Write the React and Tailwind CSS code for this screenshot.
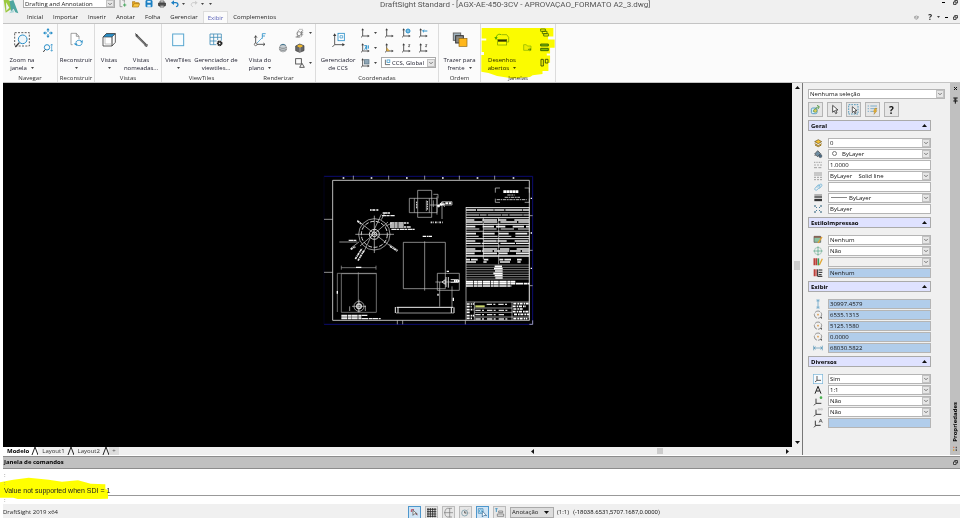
import React, { useState } from 'react';
import { ChevronDown } from 'lucide-react';

const BLUE = '#2a8fc8';
const INK = '#3c3c3c';

const Svg = ({ size = 12, box = 36, className = '', children }) => (
    <svg
        width={size}
        height={size}
        viewBox={`0 0 ${box} ${box}`}
        fill="none"
        stroke={INK}
        strokeWidth="3"
        className={`shrink-0 ${className}`}
        aria-hidden="true"
    >
        {children}
    </svg>
);

/* ---------- ribbon icons ---------- */

const ZoomWindowIcon = () => (
    <Svg size={16} box={48}>
        <rect x="2" y="2" width="44" height="40" strokeDasharray="6 4" strokeWidth="2.5" />
        <circle cx="26" cy="22" r="13" stroke={BLUE} fill="#eef6fa" />
        <path d="M16 32 4 45" strokeWidth="4" />
    </Svg>
);

const PanIcon = () => (
    <Svg size={10} box={30} >
        <path d="M15 3v24M3 15h24" stroke={BLUE} strokeDasharray="9 6" />
        <path d="M15 0l5 7H10zM15 30l5-7H10zM0 15l7-5v10zM30 15l-7-5v10z" fill={BLUE} stroke="none" />
    </Svg>
);

const ZoomFitIcon = () => (
    <Svg size={10} box={30}>
        <circle cx="12" cy="13" r="8" stroke={BLUE} />
        <path d="M6 20 1 27" />
        <path d="M26 4v20M23 7l3-4 3 4M23 21l3 4 3-4" stroke={BLUE} strokeWidth="2" />
    </Svg>
);

const RebuildIcon = () => (
    <Svg size={16} box={48}>
        <path d="M14 38H9V4h16l8 9v8" stroke="#777" strokeWidth="2" fill="#fff" />
        <path d="M25 4v9h8" stroke="#777" strokeWidth="2" />
        <path d="M24 32c0-8 14-10 17-3M42 34c-1 8-14 9-17 2" stroke={BLUE} />
        <path d="M44 24v9l-8-3zM17 35l9-2 1 9z" fill={BLUE} stroke="none" />
    </Svg>
);

const CubeIcon = () => (
    <Svg size={16} box={48}>
        <path d="M6 15 16 5h27v26L33 42H6z" fill="#fff" strokeWidth="2.5" />
        <path d="M6 15 16 5h27L33 15z" fill={BLUE} strokeWidth="2" />
        <path d="M33 15v27" strokeWidth="3" />
        <path d="M12 15v21h21" stroke="#aaa" strokeWidth="2" />
    </Svg>
);

const NamedViewsIcon = () => (
    <Svg size={16} box={48}>
        <path d="M9 9 39 39" stroke="#555" strokeWidth="7" />
        <path d="M13 14 36 38" stroke="#aaa" strokeWidth="2" />
        <path d="M6 5l8 5M35 41l7 2v-7" strokeWidth="3" />
    </Svg>
);

const TileIcon = () => (
    <Svg size={16} box={48}>
        <rect x="8" y="6" width="33" height="35" stroke="#58a6cf" fill="#f8fcfe" />
    </Svg>
);

const TileManagerIcon = () => (
    <Svg size={16} box={48}>
        <path d="M6 6h34v20M6 6v32h19M6 16h34M6 27h20M17 6v32M29 6v18" stroke="#448fb8" strokeWidth="2.5" />
        <circle cx="35" cy="34" r="6" stroke="#222" strokeWidth="5" strokeDasharray="4 1" />
        <circle cx="35" cy="34" r="4" stroke="#222" strokeWidth="3" />
    </Svg>
);

const PlanViewIcon = () => (
    <Svg size={16} box={48}>
        <path d="M11 10v27h27M7 17l4-5 4 5M34 33l5 4-5 4" strokeWidth="2.5" />
        <circle cx="11" cy="37" r="4" fill="#fff" strokeWidth="2" />
        <path d="M15 33 30 18" stroke={BLUE} strokeWidth="2" />
        <path d="M31 20V5h10M31 12h8" stroke={BLUE} strokeWidth="2.5" />
    </Svg>
);

const CcsManagerIcon = () => (
    <Svg size={16} box={48}>
        <path d="M14 8v30h26M7 45l7-7" strokeWidth="2.5" />
        <path d="M14 4l5 8H9zM45 38l-8-5v10z" fill={INK} stroke="none" />
        <rect x="24" y="4" width="19" height="22" stroke={BLUE} fill="#fff" strokeWidth="2.5" />
        <path d="M30 11h8v7h-8z" stroke={BLUE} strokeWidth="2" />
    </Svg>
);

const BringFrontIcon = () => (
    <Svg size={16} box={48}>
        <rect x="4" y="3" width="22" height="22" fill="#9fb2bd" stroke="#666" />
        <rect x="11" y="11" width="23" height="22" fill="#8b8b86" stroke="#333" />
        <rect x="21" y="19" width="24" height="24" fill="#ffb71b" stroke="#8a6414" strokeWidth="2" />
    </Svg>
);

const OpenDrawingsIcon = () => (
    <Svg size={16} box={48}>
        <path d="M22 8h16l6 8v14h-5" stroke="#6f9a78" strokeWidth="2" />
        <rect x="11" y="22" width="27" height="17" fill="#fff" stroke="#6f9a78" strokeWidth="2" />
        <path d="M12 26h26" stroke="#333" strokeWidth="6" />
        <path d="M6 18C8 8 14 5 21 8" stroke="#4aa458" strokeWidth="2.5" />
        <path d="M1 15l10 1-5 8z" fill="#4aa458" stroke="none" />
    </Svg>
);

const SphereIcon = () => (
    <Svg size={10} box={30}>
        <circle cx="15" cy="16" r="11" fill="#c8d0d5" stroke="#999" strokeWidth="2" />
        <path d="M4 13c6 4 16 4 22 0M4 19c6 4 16 4 22 0" stroke="#666" strokeWidth="2" />
        <path d="M7 7c5-4 11-4 16 0" stroke="#3a6f8c" strokeWidth="3" />
    </Svg>
);

const HideIcon = () => (
    <Svg size={10} box={30}>
        <path d="M7 26V12l6-8h10v16l-5 7z" strokeDasharray="4 2" stroke="#777" strokeWidth="2" />
        <circle cx="12" cy="17" r="6" stroke="#666" strokeWidth="2" />
        <path d="M2 27h12M20 9v14" stroke="#444" strokeWidth="2" />
    </Svg>
);

const ShadeIcon = () => (
    <Svg size={10} box={30}>
        <path d="M2 9 14 3l13 5v15l-13 5-12-5z" fill="#666" strokeWidth="2" />
        <path d="M8 9l7-3 7 3-7 4z" fill="#f2b928" stroke="#f2b928" />
        <path d="M15 14v13" stroke="#bbb" strokeWidth="2" />
    </Svg>
);

const ShapesIcon = () => (
    <Svg size={10} box={30}>
        <rect x="2" y="2" width="17" height="16" strokeWidth="2.5" />
        <path d="M21 16l7 12H14z" fill="#fff" strokeWidth="2.5" />
    </Svg>
);

// The axis glyph is shared by every coordinate command, only its accent changes.
const AxisIcon = ({ accent }) => (
    <Svg size={10} box={30}>
        <path d="M8 5v19h16M3 28l5-4" strokeWidth="2.5" />
        <path d="M8 1l4 6H4zM29 24l-6-4v8z" fill={INK} stroke="none" />
        {accent === 'globe' && <circle cx="21" cy="9" r="6" fill="#7cc0e4" stroke={BLUE} />}
        {accent === 'arrow' && <path d="M28 9H14M18 5l-4 4 4 4" stroke={BLUE} />}
        {accent === 'blue' && <path d="M13 8h7v12M20 8l-6 12M25 7v10" stroke={BLUE} strokeWidth="3" />}
        {accent === 'warm' && <path d="M8 14l9 10H8z" fill="#e6b74a" stroke="#a5761d" strokeWidth="1" />}
        {accent === 'z' && <path d="M22 5h5l-5 6h5" strokeWidth="2" />}
        {accent === 'box' && <rect x="13" y="5" width="14" height="13" fill="#8fa6b6" stroke="#55707f" strokeWidth="2" />}
    </Svg>
);

const FolderIcon = () => (
    <Svg size={9} box={27}>
        <path d="M2 22V5h8l3 4h11v13z" stroke="#84b07e" fill="#eee" strokeWidth="2" />
        <path d="M15 19h8M20 16l4 3-4 4" stroke="#3c6b42" strokeWidth="2" />
    </Svg>
);

const CascadeIcon = () => (
    <Svg size={9} box={27}>
        <path d="M2 3h14v7H2zM7 10h14v7H7zM11 17h14v7H11z" fill="#fff" stroke="#43694a" strokeWidth="2.5" />
    </Svg>
);

const TileHIcon = () => (
    <Svg size={9} box={27}>
        <path d="M2 3h23v6H2zM2 16h23v7H2z" fill="#7fbf8b" stroke="#2f5a37" strokeWidth="2.5" />
    </Svg>
);

const TileVIcon = () => (
    <Svg size={9} box={27}>
        <path d="M3 24V4h7v20zM16 15V4h8v11z" stroke="#2b3f2e" strokeWidth="2.5" />
    </Svg>
);

/* ---------- ribbon ---------- */

const Caret = ({ className = '' }) => (
    <svg width="3" height="2" viewBox="0 0 3 2" className={`inline-block shrink-0 ${className}`} aria-hidden="true">
        <path d="M0 0h3L1.500 2z" fill="#444" />
    </svg>
);

const BigButton = ({ icon, lines, caret, className }) => (
    <button className={`flex shrink-0 flex-col items-center pt-2 whitespace-nowrap ${className}`}>
        {icon}
        <span className="mt-2 block">{lines[0]}</span>
        <span className="flex h-2 items-center gap-1">
            {lines[1]}
            {caret && <Caret />}
        </span>
    </button>
);

const SmallButton = ({ label, caret, children }) => (
    <button aria-label={label} className="flex h-[15px] items-center gap-1">
        {children}
        {caret && <Caret />}
    </button>
);

const Group = ({ title, className, children }) => (
    <section aria-label={title} className={`relative flex shrink-0 flex-col border-r border-[#dcdcdc] ${className}`}>
        <div className="flex h-[50px]">{children}</div>
        <h2 className="text-center text-[#333]">{title}</h2>
    </section>
);

const Ribbon = () => (
    <div className="flex h-[60px] shrink-0 overflow-hidden border-y border-[#c4c4c4] bg-[#fbfbfb] text-[6px] leading-[8px] text-[#1b1b2b]">
        <Group title="Navegar" className="w-[55px]">
            <BigButton className="w-[38px]" icon={<ZoomWindowIcon />} lines={['Zoom na', 'janela']} caret />
            <div className="ml-0.5 flex flex-col pt-px">
                <SmallButton label="Pan"><PanIcon /></SmallButton>
                <SmallButton label="Zoom"><ZoomFitIcon /></SmallButton>
            </div>
        </Group>
        <Group title="Reconstruir" className="w-[37px]">
            <BigButton className="w-full" icon={<RebuildIcon />} lines={['Reconstruir', '']} caret />
        </Group>
        <Group title="Vistas" className="w-[67px]">
            <BigButton className="w-7" icon={<CubeIcon />} lines={['Vistas', '']} caret />
            <BigButton className="w-9" icon={<NamedViewsIcon />} lines={['Vistas', 'nomeadas...']} />
        </Group>
        <Group title="ViewTiles" className="w-[80px] border-r-transparent">
            <BigButton className="w-8" icon={<TileIcon />} lines={['ViewTiles', '']} caret />
            <BigButton className="w-11" icon={<TileManagerIcon />} lines={['Gerenciador de', 'viewtiles...']} />
        </Group>
        <Group title="Renderizar" className="w-[74px]">
            <BigButton className="w-9" icon={<PlanViewIcon />} lines={['Vista do', 'plano']} caret />
            <div className="flex flex-col pt-4">
                <SmallButton label="Render"><SphereIcon /></SmallButton>
            </div>
            <div className="ml-[7px] flex flex-col pt-px">
                <SmallButton label="Hide" caret><HideIcon /></SmallButton>
                <SmallButton label="Shade"><ShadeIcon /></SmallButton>
                <SmallButton label="Shapes" caret><ShapesIcon /></SmallButton>
            </div>
        </Group>
        <Group title="Coordenadas" className="w-[123px]">
            <BigButton className="w-11" icon={<CcsManagerIcon />} lines={['Gerenciador', 'de CCS']} />
            <div className="flex flex-col pt-px">
                <div className="flex gap-[7px]">
                    <SmallButton label="CCS" caret><AxisIcon /></SmallButton>
                    <SmallButton label="CCS X"><AxisIcon /></SmallButton>
                    <SmallButton label="CCS World"><AxisIcon accent="globe" /></SmallButton>
                    <SmallButton label="CCS Previous"><AxisIcon accent="arrow" /></SmallButton>
                </div>
                <div className="flex gap-[7px]">
                    <SmallButton label="CCS 3P" caret><AxisIcon accent="blue" /></SmallButton>
                    <SmallButton label="CCS Face"><AxisIcon accent="warm" /></SmallButton>
                    <SmallButton label="CCS Y"><AxisIcon accent="z" /></SmallButton>
                    <SmallButton label="CCS Z"><AxisIcon accent="z" /></SmallButton>
                </div>
                <div className="flex items-center gap-1">
                    <SmallButton label="CCS View" caret><AxisIcon accent="box" /></SmallButton>
                    <div className="flex h-[11px] w-[55px] items-center border border-[#aaa] bg-white pl-0.5">
                        <Svg size={7} box={30}>
                            <path d="M6 3v21h20" />
                            <rect x="13" y="4" width="12" height="11" stroke={BLUE} />
                        </Svg>
                        <Select label="CCS" value="CCS, Global" bare />
                    </div>
                </div>
            </div>
        </Group>
        <Group title="Ordem" className="w-[42px]">
            <BigButton className="w-full" icon={<BringFrontIcon />} lines={['Trazer para', 'frente']} caret />
        </Group>
        <Group title="Janelas" className="w-[75px]">
            <BigButton className="w-[42px]" icon={<OpenDrawingsIcon />} lines={['Desenhos', 'abertos']} caret />
            <div className="flex flex-col pt-4">
                <SmallButton label="Folder"><FolderIcon /></SmallButton>
            </div>
            <div className="ml-2 flex flex-col pt-px">
                <SmallButton label="Cascade"><CascadeIcon /></SmallButton>
                <SmallButton label="Tile horizontally"><TileHIcon /></SmallButton>
                <SmallButton label="Tile vertically"><TileVIcon /></SmallButton>
            </div>
            <svg
                viewBox="0 0 225 174"
                className="pointer-events-none absolute inset-x-0 top-0 w-full mix-blend-multiply"
                aria-hidden="true"
            >
                <path
                    d="M2 12h218v26h-16v9h20v25h-14v18h-10v6h10v22h-5v25h-18v9l-30 4-8 5-52 5-48-8-26-9-22-4V94h8v-9H2V50h14v-6H2z"
                    fill="#ffff00"
                />
            </svg>
        </Group>
    </div>
);

/* ---------- title bar ---------- */

const Logo = () => (
    <svg width="16" height="15" viewBox="0 0 48 45" className="shrink-0" aria-hidden="true">
        <path d="M2 0h14c10 6 14 16 10 26L8 38z" fill="#9bc93f" />
        <path d="M9 7l10 16-9 9z" fill="#f0f0f0" />
        <path d="M20 4 31 0l15 40-9-3-5-11-8 9z" fill="#4ea6a0" />
        <path d="M18 40l12-12 4 9z" fill="#a9d5d6" />
    </svg>
);

const QuickIcons = () => (
    <div className="flex h-2 items-center gap-[5px]">
        <button aria-label="New" className="flex">
            <Svg size={8} box={24}><path d="M3 0v20h7M9 0h7v8" strokeWidth="2" stroke="#777" /><path d="M17 10v10M12 15h10" stroke="#4aa861" /></Svg>
        </button>
        <button aria-label="Open" className="flex">
            <Svg size={8} box={24}><path d="M1 20V5h8l3 3h8v5" fill="#e7a925" stroke="#a87410" strokeWidth="2" /><path d="M1 21l5-10h17l-4 10z" fill="#fac741" stroke="#a87410" strokeWidth="2" /></Svg>
        </button>
        <button aria-label="Save" className="flex">
            <Svg size={8} box={24}><path d="M3 2h18v18H3z" fill="#1d80c3" stroke="#1d80c3" /><path d="M7 3h10v5H7zM7 14h10v6H7z" fill="#e5f2fa" stroke="none" /></Svg>
        </button>
        <button aria-label="Print" className="flex">
            <Svg size={8} box={24}><path d="M2 9h20v8H2z" fill="#555" /><path d="M6 3h12v5H6zM6 16h12v5H6z" fill="#eee" strokeWidth="2" /></Svg>
        </button>
        <button aria-label="Undo" className="flex items-center gap-[3px]">
            <Svg size={8} box={24}><path d="M5 8h10c8 1 8 11 0 12" stroke="#1d80c3" strokeWidth="4" /><path d="M0 8l9-7v14z" fill="#1d80c3" stroke="none" /></Svg>
            <Caret />
        </button>
        <button aria-label="Redo" className="flex items-center gap-[3px]">
            <Svg size={8} box={24}><path d="M18 8H9c-7 1-7 11 0 12" stroke="#ccc" /><path d="M23 8l-8-6v12z" fill="#ccc" stroke="none" /></Svg>
            <Caret />
        </button>
        <button aria-label="Customize" className="flex"><Caret /></button>
    </div>
);

const Restore = ({ size = 6 }) => (
    <Svg size={size} box={18}>
        <path d="M6 6V2h10v9h-4" stroke="#222" />
        <path d="M2 7h9v9H2z" stroke="#222" fill="#eee" />
    </Svg>
);

const Minimize = () => <span className="block h-px w-[3px] bg-black" />;

const menus = ['Inicial', 'Importar', 'Inserir', 'Anotar', 'Folha', 'Gerenciar', 'Exibir', 'Complementos'];

const Header = () => {
    const [active, setActive] = useState('Exibir');

    return (
        <header className="flex shrink-0 bg-[#f0f0f0] text-[#222]">
            <Logo />
            <div className="min-w-0 flex-1">
                <div className="flex h-[11px] items-start">
                    <div className="ml-1 flex h-2 w-[92px] shrink-0 border border-t-0 border-[#aaa] bg-white text-[6px]">
                        <Select label="Workspace" value="Drafting and Annotation" bare />
                    </div>
                    <div className="ml-1 shrink-0"><QuickIcons /></div>
                    <h1 className="ml-[168px] min-w-0 flex-1 font-[Roboto,sans-serif] text-[8px] leading-[9px] whitespace-nowrap text-[#555]">
                        DraftSight Standard - [AGX-AE-450-3CV - APROVAÇAO_FORMATO A2_3.dwg]
                    </h1>
                    <div className="flex h-[5px] items-center gap-2 pr-0.5">
                        <button aria-label="Minimize" className="flex"><Minimize /></button>
                        <button aria-label="Restore" className="flex"><Restore size={5} /></button>
                    </div>
                </div>
                <div className="flex h-3 items-stretch">
                    <nav className="flex flex-1 pl-[3px] text-[6px] leading-[12px]">
                        {menus.map((m) => (
                            <button
                                key={m}
                                onClick={() => setActive(m)}
                                className={
                                    m === active
                                        ? 'border border-b-0 border-[#ddd] bg-[#fbfbfb] px-1 text-[#5a62b8]'
                                        : 'px-[5px]'
                                }
                            >
                                {m}
                            </button>
                        ))}
                    </nav>
                    <div className="flex items-center gap-[5px] pr-0.5 text-[8px] leading-[12px] font-bold">
                        <button aria-label="Feedback" className="mr-1 flex">
                            <Svg size={5} box={15}><path d="M2 5l5-2 6 2-1 5-5 3-5-3zM2 5l6 4 5-4" stroke="#888" strokeWidth="2" /></Svg>
                        </button>
                        <button>?</button>
                        <button aria-label="Help menu" className="flex"><Caret /></button>
                        <button aria-label="Minimize drawing" className="flex"><Minimize /></button>
                        <button aria-label="Restore drawing" className="flex"><Restore size={5} /></button>
                    </div>
                </div>
            </div>
        </header>
    );
};

/* ---------- drawing ---------- */

// [y, dash pattern, thickness] of the specification table rows
const tableRows = [
    [110, '', 3], [117, '30 3 50 2', 4], [125, '', 2], [132, '40 2 20 3', 3], [140, '', 3],
    [147, '25 24 44 3', 4], [153, '50 4 40 9', 4], [160, '', 3], [167, '28 22 34 6', 5], [174, '40 12', 3],
    [181, '', 2], [188, '30 20 36 12', 5], [196, '38 12 45 3', 3], [203, '', 3], [210, '28 24 40 2', 5],
    [217, '44 3 50 6', 4], [225, '', 3], [234, '28 22 44 8', 5], [240, '46 2 32 4', 5], [247, '26 25 42 6', 5],
    [255, '', 4], [266, '12 3 20 18 14 33', 5], [273, '30 22 10 40', 4],
];

const Drawing = () => (
    <svg
        width="220"
        height="158"
        viewBox="0 0 660 474"
        fill="none"
        stroke="#d8d8d8"
        strokeWidth="2"
        className="absolute top-[88px] left-[317px]"
        role="img"
        aria-label="AGX-AE-450-3CV"
    >
        <path d="M12 16h626v444H12" stroke="#0c0c70" strokeWidth="3" />
        <path d="M12 16v444" stroke="#050528" />
        <path d="M38 28h590v420H38z" stroke="#e0e0e0" strokeWidth="2.5" />
        <path d="M100 14v12M206 14v12M314 14v12M418 14v12M524 14v12M12 145h26M12 304h26M232 448v12M248 448v12M436 448v12M628 134h10M628 238h10M628 344h10M638 448v12h-10" />
        <path d="M68 21h5M152 21h5M258 21h5M366 21h5M470 21h5M578 21h5M634 80v4M634 184v4M634 290v4" stroke="#fff" strokeWidth="4" />

        {/* flange, front view */}
        <circle cx="163" cy="190" r="47" />
        <circle cx="163" cy="190" r="39" strokeDasharray="12 5" strokeWidth="3" />
        <circle cx="163" cy="190" r="15" strokeWidth="3" />
        <circle cx="163" cy="190" r="7" strokeWidth="3" />
        <path d="M163 134v112M106 190h116" />
        <path d="M112 148l100 78M130 246l54-116M120 225l84-72M58 213h54M92 232l26-20M184 146l10-20M196 166l20-10M208 220l26 18" />
        <path d="M150 117h27" stroke="#fff" strokeWidth="5" strokeDasharray="5 2 9 3" />
        <path d="M188 126h22M186 134h38M210 156h56M210 162h42M210 168h62M214 175h70M86 208h24" stroke="#eee" strokeWidth="4" strokeDasharray="14 1 8 2" />
        <path d="M112 150l12 9M92 235l14-8M106 264l20-32M114 269l18-31M210 226l22 14" stroke="#e8e8e8" strokeWidth="5" strokeDasharray="7 2 4 1" />

        {/* motor, side view */}
        <path d="M293 58h42v81h-42zM268 82h83v43h-83zM283 82v43M351 76v55M340 70h14v12M319 88v32M328 82v43M340 88v20" stroke="#c4c4c4" />
        <path d="M330 102h26l12-10h28v10h-34M366 100v44M356 110l10-18 8 16" />
        <path d="M352 106l20-9M360 100h14M376 97h18" stroke="#fff" strokeWidth="6" strokeDasharray="8 2" />
        <path d="M322 90v28M290 92v22" stroke="#eee" strokeWidth="3" strokeDasharray="5 2" />
        <path d="M332 154h38" stroke="#ddd" strokeWidth="5" strokeDasharray="5 3 2 3" />

        {/* body */}
        <path d="M250 214h126v139H250zM314 211v148" stroke="#c4c4c4" />
        <path d="M308 196h28" stroke="#fff" strokeWidth="4" strokeDasharray="10 2 5 1" />
        <path d="M352 307h66v51h-66zM359 333v74M396 346v62M346 333h70" stroke="#c4c4c4" />
        <path d="M366 333l10-7v14zM385 318v32M378 318v30M392 326h24M392 334h24" strokeWidth="3" />
        <path d="M402 330h16" stroke="#fff" strokeWidth="6" strokeDasharray="5 1" />
        <path d="M380 301h7M354 368v6M400 380v10" stroke="#fff" strokeWidth="4" />
        <path d="M230 409h170M226 408v18M234 408v18M394 409v17M402 409v17" stroke="#f0f0f0" strokeWidth="3" />
        <path d="M228 426h174" />

        {/* base plate */}
        <path d="M64 290h104M64 284v12M168 284v12M52 307v116M64 308h105v116H64zM52 307h118M115 304v120" stroke="#a5a5a5" />
        <path d="M108 289h16M52 360v8" stroke="#fff" strokeWidth="4" />
        <circle cx="117" cy="406" r="15" />
        <circle cx="117" cy="406" r="7" strokeWidth="4" />
        <path d="M96 406h42M117 386v38M89 406v14M136 404v16" />
        <path d="M64 433h78M64 438h60M64 443h118" stroke="#eee" strokeWidth="4" strokeDasharray="18 2 10 1" />

        {/* stamp */}
        <path d="M540 51h-14v14M614 51h14v14M526 83v11h14M614 94h14V83" />
        <path d="M550 62h46" stroke="#fff" strokeWidth="8" strokeDasharray="8 1" />
        <path d="M562 72h22M554 79h46M530 86h90" stroke="#bbb" strokeWidth="3" strokeDasharray="10 2 5 2" />

        {/* specification table */}
        <path d="M438 108v340M628 108v340M490 140v125M536 140v140" />
        {tableRows.map(([y, dash, thickness]) => (
            <path key={y} d={`M438 ${y}h190`} stroke="#ededed" strokeWidth={thickness} strokeDasharray={dash} />
        ))}
        <path d="M438 282h190M438 289h190M438 296h190M438 303h190M438 310h190M438 317h190M438 324h190" stroke="#b9b9b9" />
        <path d="M524 286h22M522 293h26M525 300h23M520 307h28M524 314h24M526 321h22" stroke="#fff" strokeWidth="5" />
        <path d="M438 332h150M438 338h190M438 345h136" stroke="#fff" strokeWidth="5" strokeDasharray="22 2 9 1 14 2" />

        {/* title block */}
        <path d="M438 393h190M463 393v55M576 393v55M463 411h113M463 424h113M463 438h165" />
        <path d="M440 399h22M440 407h15M440 416h20M440 424h12M440 434h22M440 442h16M580 398h46M578 406h40M580 414h30M578 422h50M582 430h46M580 443h42" stroke="#fff" strokeWidth="5" strokeDasharray="9 3 5 2" />
        <path d="M466 418h100M466 431h90M466 444h96M500 400h70" stroke="#ddd" strokeWidth="4" strokeDasharray="16 4 6 9" />
        <path d="M466 406h28" stroke="#c8d46a" strokeWidth="6" />
    </svg>
);

const Arrow = ({ rotate = '' }) => (
    <svg width="5" height="3" viewBox="0 0 5 3" className={rotate} aria-hidden="true">
        <path d="M2.500 0 5 3H0z" fill="#111" />
    </svg>
);

const Slash = () => (
    <svg width="7" height="8" viewBox="0 0 7 8" fill="none" stroke="#222" className="ml-0.5" aria-hidden="true">
        <path d="M1 8 4 0l3 8" />
    </svg>
);

const Workspace = () => (
    <main className="flex min-w-0 flex-1 flex-col">
        <div className="flex min-h-0 flex-1">
            <div className="relative flex-1 overflow-hidden bg-black">
                <Drawing />
            </div>
            <div className="flex w-[10px] flex-col items-center justify-between bg-[#f0f0f0] py-[3px]">
                <Arrow />
                <span className="h-[9px] w-1.5 bg-[#cdcdcd]" />
                <Arrow rotate="rotate-180" />
            </div>
        </div>
        <div className="flex h-2 items-center bg-[#f0f0f0] text-[6px] leading-[8px]">
            <button className="flex items-center bg-white pl-1 font-bold">
                Modelo
                <Slash />
            </button>
            <button className="flex items-center pl-1 text-[#333]">Layout1<Slash /></button>
            <button className="flex items-center pl-1 text-[#333]">Layout2<Slash /></button>
            <button aria-label="Add layout" className="w-2.5 bg-[#ddd] text-[#555]">+</button>
            <div className="ml-auto flex w-[34%] items-center justify-between pr-3">
                <Arrow rotate="-rotate-90" />
                <span className="h-1.5 w-1.5 bg-[#cdcdcd]" />
                <Arrow rotate="rotate-90" />
            </div>
        </div>
    </main>
);

/* ---------- properties panel ---------- */

const Select = ({ label, value, prefix, disabled, bare }) => (
    <div
        className={`flex min-w-0 flex-1 items-stretch ${
            bare ? '' : disabled ? 'h-[10px] border border-[#b5b5b5] bg-[#f0f0f0]' : 'h-[10px] border border-[#b5b5b5] bg-white'
        }`}
    >
        {prefix}
        <div className="relative flex min-w-0 flex-1 items-center">
            <select
                aria-label={label}
                disabled={disabled}
                className="h-full w-full appearance-none bg-transparent pl-px leading-[8px]"
            >
                <option>{value}</option>
            </select>
            <span className="pointer-events-none absolute inset-y-0 right-0 flex w-2 items-center justify-center border border-[#c2c2c2] bg-[#e6e6e6]">
                <ChevronDown size={6} strokeWidth={3} color="#555" className="shrink-0" />
            </span>
        </div>
    </div>
);

const Field = ({ label, value, locked }) => (
    <input
        aria-label={label}
        defaultValue={value}
        readOnly={locked}
        className={`h-[10px] min-w-0 flex-1 border border-[#b5b5b5] pl-px leading-[8px] ${locked ? 'bg-[#b1cdeb]' : 'bg-white'}`}
    />
);

const glyphs = {
    layer: <><path d="M5 11l11-6 10 6-10 6z" fill="#f5c033" stroke="#5e4c1b" strokeWidth="2" /><path d="M5 17l11 6 10-6M6 21l10 5 9-5" stroke="#9b7416" strokeWidth="3" /></>,
    color: <><path d="M5 15 14 5l9 9-9 9z" fill="#6f8da1" strokeWidth="2" /><circle cx="22" cy="21" r="5" fill="#4c6b83" strokeWidth="1" /><path d="M4 19h6" stroke="#888" /></>,
    scale: <><path d="M3 7h24" strokeDasharray="3 2" stroke="#777" strokeWidth="2" /><path d="M3 15h24" strokeDasharray="6 3" stroke="#888" strokeWidth="2" /><path d="M3 23h24" strokeDasharray="9 4" stroke="#777" strokeWidth="2" /></>,
    style: <><path d="M3 6h24M3 12h24" stroke="#777" strokeWidth="2" /><path d="M3 19h24M3 26h24" strokeDasharray="6 3" stroke="#777" strokeWidth="2" /></>,
    link: <path d="M6 19l8-9c5-4 9 1 6 5l-7 8c-4 4-10 0-7-4zM12 17l8-9c4-4 9 0 6 4l-7 8" stroke="#52a3cf" strokeWidth="2" />,
    weight: <><path d="M4 6h23" strokeWidth="2" stroke="#333" /><path d="M4 12h23" strokeWidth="4" stroke="#333" /><path d="M4 21h23" strokeWidth="7" stroke="#333" /></>,
    transparency: <><path d="M5 5l7 7M25 5l-7 7M5 25l7-7M25 25l-7-7" stroke="#4d7f9b" /><path d="M3 3h6v6H3zM21 3h6v6h-6zM3 21h6v6H3zM21 21h6v6h-6z" fill="#8aa5b3" stroke="none" /></>,
    plot: <><path d="M3 4h20v18H3z" fill="#8ac0a0" stroke="#555" strokeWidth="2" /><path d="M3 6h20" stroke="#8c4e42" strokeWidth="4" /><path d="M27 6 15 24" stroke="#e5a22b" strokeWidth="4" /></>,
    center: <><circle cx="15" cy="15" r="11" stroke="#8ab6a0" strokeWidth="2" /><path d="M15 1v28M1 15h28" stroke="#47a07c" strokeWidth="2" /></>,
    book: <><path d="M4 4v21M10 4v21" stroke="#bd3f38" strokeWidth="5" /><path d="M16 4v21" stroke="#3e9659" strokeWidth="5" /><path d="M28 5 19 24" stroke="#e2a831" strokeWidth="4" /></>,
    table: <><path d="M4 4v21M9 4v21" stroke="#bd3f38" strokeWidth="4" /><path d="M14 4v21h14M17 6h11M17 13h11M17 20h9" stroke="#222" /></>,
    height: <path d="M10 3h10M10 27h10M15 4v22M12 8l3-4 3 4M12 22l3 4 3-4" stroke="#4b96c0" strokeWidth="2" />,
    circle: <><circle cx="15" cy="14" r="11" stroke="#666" strokeWidth="2" strokeDasharray="17 3" /><path d="M15 11v6M12 14h6" stroke="#dc963c" strokeWidth="2" /><path d="M21 22l6 5v-6z" fill="#555" stroke="none" /></>,
    width: <path d="M2 8v14M28 8v14M3 15h24M8 11l-5 4 5 4M22 11l5 4-5 4" stroke="#4b8eb2" strokeWidth="2" />,
    ccsOn: <><rect x="1" y="1" width="28" height="28" stroke="#78b5d8" strokeWidth="2" fill="#f8fcff" /><path d="M12 6v13h12M6 24l6-5" strokeWidth="2.5" /></>,
    text: <path d="M6 26 15 4l9 22M10 18h10" stroke="#222" strokeWidth="3" />,
    ccsDot: <><path d="M9 8v14h16M3 28l6-6" strokeWidth="3" /><circle cx="24" cy="5" r="4" fill="#47b04b" stroke="none" /></>,
    ccsView: <><path d="M9 8v14h16M3 28l6-6" strokeWidth="3" /><path d="M15 5h5v4h-5zM23 5h5v4h-5z" stroke="#888" strokeWidth="1" /></>,
    ccsName: <><path d="M7 8v14h16M3 28l6-6" strokeWidth="3" /><path d="M18 14l5-11 5 11M20 10h6" strokeWidth="2" /></>,
};

const sections = [
    {
        title: 'Geral',
        rows: [
            { glyph: 'layer', value: '0', select: true },
            { glyph: 'color', value: 'ByLayer', select: true, swatch: true },
            { glyph: 'scale', value: '1.0000' },
            { glyph: 'style', value: 'ByLayer \u00a0\u00a0 Solid line', select: true },
            { glyph: 'link', value: '' },
            { glyph: 'weight', value: 'ByLayer', select: true, line: true },
            { glyph: 'transparency', value: 'ByLayer' },
        ],
    },
    {
        title: 'EstiloImpressao',
        rows: [
            { glyph: 'plot', value: 'Nenhum', select: true },
            { glyph: 'center', value: 'Não', select: true },
            { glyph: 'book', value: '', select: true, disabled: true },
            { glyph: 'table', value: 'Nenhum', locked: true },
        ],
    },
    {
        title: 'Exibir',
        rows: [
            { glyph: 'height', value: '30997.4579', locked: true },
            { glyph: 'circle', value: '6535.1313', locked: true },
            { glyph: 'circle', value: '5125.1580', locked: true },
            { glyph: 'circle', value: '0.0000', locked: true },
            { glyph: 'width', value: '68030.5822', locked: true },
        ],
    },
    {
        title: 'Diversos',
        rows: [
            { glyph: 'ccsOn', value: 'Sim', select: true },
            { glyph: 'text', value: '1:1', select: true },
            { glyph: 'ccsDot', value: 'Não', select: true },
            { glyph: 'ccsView', value: 'Não', select: true },
            { glyph: 'ccsName', value: '', locked: true },
        ],
    },
];

const Section = ({ title, rows }) => {
    const [open, setOpen] = useState(true);

    return (
        <section className="pb-[3px]">
            <button
                onClick={() => setOpen(!open)}
                aria-expanded={open}
                className="flex h-[11px] w-full items-center justify-between border border-[#aaa] bg-[#dfe2ff] pr-[3px] pl-0.5 font-bold text-black"
            >
                {title}
                <Arrow rotate={open ? '' : 'rotate-180'} />
            </button>
            {open && (
                <div className="pt-[6px]">
                    {rows.map((row, i) => (
                        <div key={i} className="flex h-[11px] items-center gap-[5px] pl-[5px]">
                            <Svg size={10} box={30}>{glyphs[row.glyph]}</Svg>
                            {row.select ? (
                                <Select
                                    label={`${title} ${i + 1}`}
                                    value={row.value}
                                    disabled={row.disabled}
                                    prefix={
                                        row.swatch ? (
                                            <span className="mr-1 ml-[3px] size-[5px] shrink-0 self-center rounded-full border border-[#777]" />
                                        ) : row.line ? (
                                            <span className="mr-px ml-0.5 h-px w-4 shrink-0 self-center bg-[#888]" />
                                        ) : null
                                    }
                                />
                            ) : (
                                <Field label={`${title} ${i + 1}`} value={row.value} locked={row.locked} />
                            )}
                        </div>
                    ))}
                </div>
            )}
        </section>
    );
};

const ToolButton = ({ label, children }) => (
    <button
        aria-label={label}
        className="flex size-[15px] items-center justify-center border border-[#b4b4b4] bg-[#e6e6e6]"
    >
        {children}
    </button>
);

const Properties = () => (
    <aside className="flex shrink-0 border-l border-[#777] bg-[#f0f0f0]" aria-label="Propriedades">
        <div className="w-[147px] pt-[6px] pl-[5px] text-[6px] leading-[8px] text-[#111]">
            <div className="flex w-[137px]">
                <Select label="Seleção" value="Nenhuma seleção" />
            </div>
            <div className="flex gap-1 pt-[3px] pb-[3px]">
                <ToolButton label="Quick select">
                    <Svg size={11} box={33}>
                        <rect x="4" y="12" width="17" height="17" rx="4" stroke="#5b9fc2" fill="#d5edf6" />
                        <path d="M10 23C14 14 20 10 27 8M21 4l7 4-4 7" stroke="#5f9e50" />
                        <circle cx="16" cy="20" r="5" fill="#e6ce58" stroke="#649448" strokeWidth="2" />
                    </Svg>
                </ToolButton>
                <ToolButton label="Select">
                    <Svg size={11} box={33}>
                        <path d="M11 4v21l5-5 4 9 4-2-4-9h7z" fill="#fff" stroke="#333" strokeWidth="2.5" />
                    </Svg>
                </ToolButton>
                <ToolButton label="Select window">
                    <Svg size={11} box={33}>
                        <rect x="2" y="2" width="28" height="28" strokeDasharray="5 3" stroke="#3989b2" strokeWidth="2.5" />
                        <path d="M13 8v18l5-5 3 8 3-2-3-7h6z" fill="#fff" stroke="#222" strokeWidth="2" />
                    </Svg>
                </ToolButton>
                <ToolButton label="Apply">
                    <Svg size={11} box={33}>
                        <path d="M2 6h4M10 6h20M2 14h4M10 14h20M2 22h4M10 22h8" stroke="#4a93bd" strokeWidth="2" />
                        <path d="M24 13h6l-4 7h4l-9 11 2-8h-4z" fill="#f3b829" stroke="#806121" strokeWidth="1" />
                    </Svg>
                </ToolButton>
                <ToolButton label="Help"><span className="text-[10px] font-bold">?</span></ToolButton>
            </div>
            <div className="w-[123px]">
                {sections.map((s) => <Section key={s.title} {...s} />)}
            </div>
        </div>
        <div className="flex w-[10px] flex-col items-center bg-[#c0c0c0] pt-[3px] pb-[3px]">
            <button aria-label="Close" className="flex">
                <Svg size={5} box={15}><path d="M3 3l9 9M12 3l-9 9" stroke="#111" /></Svg>
            </button>
            <button aria-label="Pin" className="mt-[6px] flex">
                <Svg size={7} box={21}><path d="M4 3h13M4 12h13M10 12v8" stroke="#111" /><path d="M10 3v9" stroke="#333" strokeWidth="6" /></Svg>
            </button>
            <span className="mt-auto rotate-180 text-[6px] leading-[8px] font-bold [writing-mode:vertical-rl]">Propriedades</span>
            <Svg size={6} box={18} className="mt-1">
                <path d="M3 2h4v4H3z" fill="#dd7c56" stroke="none" />
                <path d="M11 2h4v5h-4zM11 10h4v5h-4z" fill="#555" stroke="none" />
                <path d="M3 10h4v5H3z" fill="#d5a244" stroke="none" />
            </Svg>
        </div>
    </aside>
);

/* ---------- command window and status bar ---------- */

const CommandWindow = () => (
    <section className="shrink-0">
        <div className="mt-px flex h-[13px] items-center justify-between border-y border-[#8c8c8c] bg-[#c0c0c0] pr-0.5 text-[6px]">
            <h2 className="pl-px font-bold">Janela de comandos</h2>
            <button aria-label="Float" className="flex"><Restore size={5} /></button>
        </div>
        <div className="relative h-[27px] border-b border-[#999] bg-white pt-0.5 text-[7px] leading-[8px]">
            <svg
                width="112"
                height="22"
                viewBox="0 0 336 66"
                className="absolute bottom-[-4px] -left-[3px]"
                aria-hidden="true"
            >
                <path d="M0 16 40 8l46-6 60 6 40 6 48-4 38 10 44 2v14l8 3v26l-36 1-48 2H60l-20-6H0z" fill="#ffff00" />
            </svg>
            <p className="relative pl-px text-[6px] text-[#777]">:</p>
            <p className="relative pl-px text-[6px] text-[#777]">:</p>
            <p className="relative pl-px font-['Liberation_Sans',sans-serif] text-[#222]">Value not supported when SDI = 1</p>
        </div>
        <label className="flex h-2 bg-white pl-px text-[6px] leading-[8px] text-[#777]">
            <span>:</span>
            <input aria-label="Comando" className="min-w-0 flex-1 bg-transparent outline-none" />
        </label>
    </section>
);

const statusTools = [
    { label: 'Snap', active: true, art: <><path d="M7 8h8M7 8v7M11 12l14 12" stroke="#b8465a" /><path d="M12 10v15l5-5 8 1z" fill="#fff" strokeWidth="2" /></> },
    { label: 'Grid', art: <path d="M3 7h28M3 14h28M3 21h28M3 28h28M6 3h0v28M13 3v28M20 3v28M27 3v28" stroke="#222" strokeWidth="2.5" /> },
    { label: 'Ortho', art: <path d="M27 4H13C3 6 3 28 13 30h14M3 17h27M20 3v28" stroke="#777" strokeWidth="2" /> },
    { label: 'Polar', art: <><circle cx="14" cy="18" r="9" stroke="#628b9b" strokeWidth="2" /><path d="M14 18 26 5M14 18h16" strokeWidth="1" stroke="#888" /><path d="M14 12v6h5" stroke="#333" strokeWidth="2" /></> },
    { label: 'ESnap', active: true, art: <><path d="M4 5h14v14H4z" stroke="#337fae" strokeWidth="2" /><path d="M16 12v18l5-5 8 1z" fill="#fff" stroke="#285f8b" strokeWidth="2" /><circle cx="11" cy="12" r="4" stroke="#3da0d0" strokeWidth="2" /></> },
    { label: 'ETrack', art: <><path d="M4 5h7M7 5v10" stroke="#4a98c4" /><path d="M14 12h12v5H14zM10 21h19v7H10z" stroke="#666" strokeWidth="2" /></> },
];

const StatusBar = () => (
    <footer className="flex h-[14px] shrink-0 items-center overflow-hidden bg-[#f0f0f0] pt-0.5 text-[6px] leading-[8px] text-[#222]">
        <span className="w-[405px] shrink-0">DraftSight 2019 x64</span>
        <div className="flex gap-1">
            {statusTools.map(({ label, active, art }) => (
                <button
                    key={label}
                    aria-label={label}
                    aria-pressed={!!active}
                    className={`flex size-[13px] items-center justify-center border ${
                        active ? 'border-[#4e97cd] bg-[#cfe4f5]' : 'border-[#bbb] bg-[#e6e6e6]'
                    }`}
                >
                    <Svg size={11} box={33}>{art}</Svg>
                </button>
            ))}
        </div>
        <div className="relative ml-1 flex h-[11px] w-11 items-center border border-[#aaa] bg-[#ddd]">
            <select aria-label="Anotação" className="w-full appearance-none pl-px leading-[8px]">
                <option>Anotação</option>
            </select>
            <span className="pointer-events-none absolute right-1 flex"><Arrow rotate="rotate-180" /></span>
        </div>
        <span className="ml-[3px]">(1:1)</span>
        <span className="ml-1 font-[Roboto,sans-serif]">(-18038.6531,5707.1687,0.0000)</span>
    </footer>
);

const App = () => (
    <div className="flex h-screen w-full flex-col overflow-hidden bg-white pl-[3px] font-['Open_Sans','Noto_Sans',sans-serif]">
        <Header />
        <Ribbon />
        <div className="flex min-h-0 flex-1 bg-[#f0f0f0]">
            <Workspace />
            <Properties />
        </div>
        <CommandWindow />
        <StatusBar />
    </div>
);

export default App;
